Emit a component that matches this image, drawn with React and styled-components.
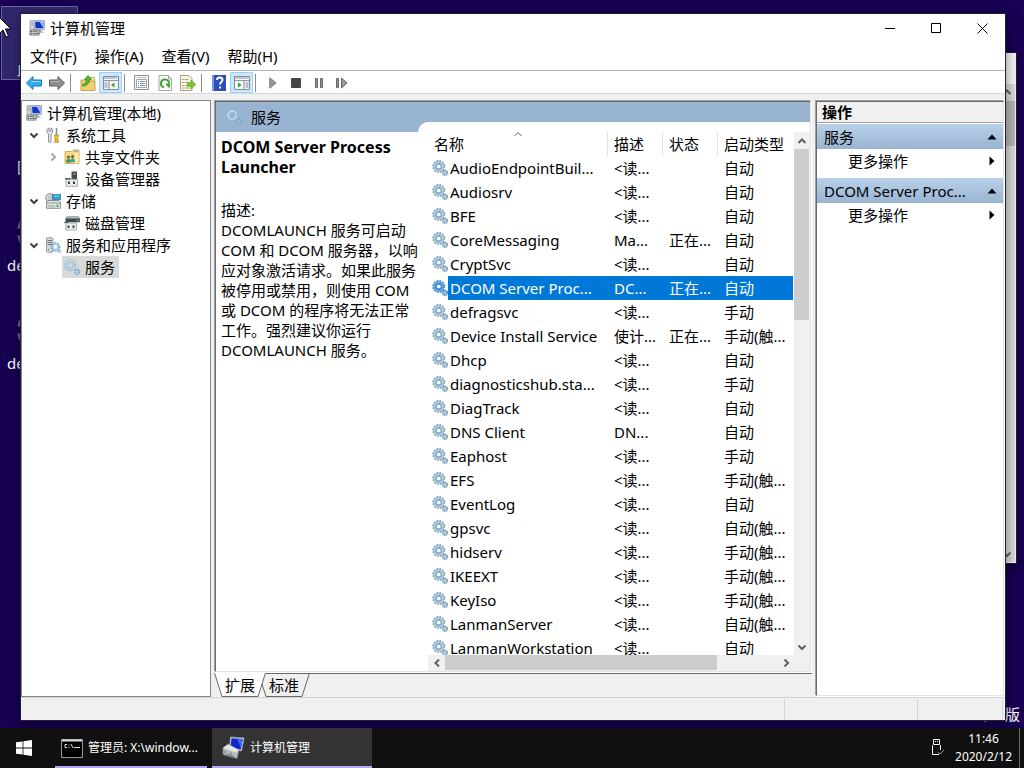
import { useState } from "react";
import styled, { createGlobalStyle, css } from "styled-components";

const services = [
  ["AudioEndpointBuil...", "<读...", "", "自动"],
  ["Audiosrv", "<读...", "", "自动"],
  ["BFE", "<读...", "", "自动"],
  ["CoreMessaging", "Ma...", "正在...", "自动"],
  ["CryptSvc", "<读...", "", "自动"],
  ["DCOM Server Proc...", "DC...", "正在...", "自动"],
  ["defragsvc", "<读...", "", "手动"],
  ["Device Install Service", "使计...", "正在...", "手动(触..."],
  ["Dhcp", "<读...", "", "自动"],
  ["diagnosticshub.sta...", "<读...", "", "手动"],
  ["DiagTrack", "<读...", "", "自动"],
  ["DNS Client", "DN...", "", "自动"],
  ["Eaphost", "<读...", "", "手动"],
  ["EFS", "<读...", "", "手动(触..."],
  ["EventLog", "<读...", "", "自动"],
  ["gpsvc", "<读...", "", "自动(触..."],
  ["hidserv", "<读...", "", "手动(触..."],
  ["IKEEXT", "<读...", "", "手动(触..."],
  ["KeyIso", "<读...", "", "手动(触..."],
  ["LanmanServer", "<读...", "", "自动(触..."],
  ["LanmanWorkstation", "<读...", "", "自动"],
];

//Icons.
const ComputerIcon = () => (
  <svg width="16" height="16" viewBox="0 0 16 16">
    <path d="M1 .8h4.500v8.500H1z" fill="#d5d8da" stroke="#8a8f94" strokeWidth=".7" />
    <path d="M2 3h2.500M2 5h2.500" stroke="#8e9498" strokeWidth=".8" />
    <path d="M4.700.5h11l-.4 9H5.500z" fill="#e3e7ea" stroke="#888e96" strokeWidth=".7" />
    <path d="M6 1.700h8.500l-.3 6.600H6.500z" fill="#1433cf" />
    <path d="M10.500 1.700h4l-.3 5.800z" fill="#9dbcf7" />
    <path d="M8.500 9.800h4v1.700h2v1.300h-5z" fill="#a3a8ad" />
    <path d="M.8 10h9.500v5.200H.8z" fill="#c4c8ca" stroke="#6f7578" strokeWidth=".7" />
    <path d="M1.500 11.500h1.500M4 11.500h1.500M6.500 11.500H8M1.500 13.500H3M4 13.500h1.500M6.500 13.500h3" stroke="#4f5659" />
  </svg>
);

const ConsoleIcon = () => (
  <svg width="23" height="24" viewBox="0 0 23 24">
    <path d="M8.500 1 22 2l-2.500 13-12-2z" fill="#e8ebee" stroke="#9299a3" strokeWidth=".8" />
    <path d="M9.500 2.300 20.800 3l-2 10.500L8.500 12z" fill="#0e25c9" />
    <path d="m15 2.600 5.800.4-1.800 9z" fill="#3e68ea" />
    <path d="m1 12 5-4 11 6-2 8.500L1 18.500z" fill="#b5babc" stroke="#7d8487" strokeWidth=".8" />
    <path d="m1 12 5-3.500 11 5.500-3 2.500z" fill="#e5e8e9" />
    <path d="M3 15v2M9 16.500v2.500M4 18l8 2.500" stroke="#767e82" strokeWidth="1.200" />
  </svg>
);

const GearsIcon = ({ selected }) => (
  <svg width="16" height="16" viewBox="0 0 16 16" fill="none">
    <circle cx="6.800" cy="6.500" r="5.600" stroke={selected ? "#2b7fcf" : "#6e94b1"} strokeWidth="1.700" strokeDasharray="1.800 1.120" />
    <circle cx="6.800" cy="6.500" r="3.900" stroke={selected ? "#5aa5e4" : "#a6c9e0"} strokeWidth="2.700" />
    <circle cx="6.800" cy="6.500" r="2.500" stroke={selected ? "#0b64b4" : "#64879f"} strokeWidth="1" fill="#fff" />
    <circle cx="13" cy="12.800" r="2.600" stroke={selected ? "#2b7fcf" : "#7196b0"} strokeWidth="1.300" strokeDasharray="1.200 .84" />
    <circle cx="13" cy="12.800" r="1.500" stroke={selected ? "#5aa5e4" : "#93b6cd"} strokeWidth="1.500" />
  </svg>
);

const PaleGears = () => (
  <svg width="16" height="16" viewBox="0 0 16 16" fill="none">
    <circle cx="6.200" cy="6.200" r="5.400" stroke="#86aeca" strokeWidth="1.300" strokeDasharray="1.700 1.130" />
    <circle cx="6.200" cy="6.200" r="4" stroke="#b7d8ea" strokeWidth="2.200" />
    <circle cx="6.200" cy="6.200" r="2.900" stroke="#86aeca" strokeWidth=".6" />
    <circle cx="13" cy="12.800" r="2.400" stroke="#6f9ab8" strokeWidth="1.500" strokeDasharray="1.200 .7" />
    <circle cx="13" cy="12.800" r="1.500" stroke="#9cc3db" />
  </svg>
);

const ToolsIcon = () => (
  <svg width="16" height="16" viewBox="0 0 16 16">
    <path d="M4 .8 2 2.500v3L3.500 7v8H6V7l1.700-1.500v-3L6 .8V4H4z" fill="#e6e8ea" stroke="#777d82" strokeWidth=".8" />
    <path d="M11.500 1v7" stroke="#8c9297" strokeWidth="1.600" />
    <path d="M9.700 8h3.600v1.600l-.7 1 .7 4.700H9.700l.7-4.700-.7-1z" fill="#f7bd1f" stroke="#b98208" strokeWidth=".8" />
  </svg>
);

const SharedIcon = () => (
  <svg width="16" height="16" viewBox="0 0 16 16">
    <path d="M1 2.500h7l1.500-1.500H15v13.500H1z" fill="#f3d981" stroke="#c4a34c" strokeWidth=".8" />
    <path d="M9.500 2h4" stroke="#4ea5e0" />
    <path d="M11 4h3.500v9.500L11 15z" fill="#fae9b0" />
    <circle cx="4.500" cy="8" r="1.500" fill="#7e5430" />
    <circle cx="8.500" cy="7.500" r="1.500" fill="#7e5430" />
    <path d="M2 13.500c0-5 5-5 5 0z" fill="#2d9b52" />
    <path d="M6.500 13c0-5 4.500-5 4.500 0z" fill="#3aa0a8" />
  </svg>
);

const DeviceIcon = () => (
  <svg width="16" height="16" viewBox="0 0 16 16">
    <path d="M7.500.5H13v8.300H7.500z" fill="#454c50" />
    <path d="M10.500 2v2" stroke="#65ca55" strokeWidth="1.500" />
    <path d="M2 8.300h11.500v7H2z" fill="#eceeef" stroke="#969b9e" strokeWidth=".8" />
    <path d="M1 7h5.500v1.500H1z" fill="#5a6064" />
    <path d="M4 10.500h2v2.500H4zM9 10.500h2v2.500H9z" fill="#3c4144" />
  </svg>
);

const StorageIcon = () => (
  <svg width="16" height="16" viewBox="0 0 16 16">
    <circle cx="5" cy="5" r="4.300" fill="#d2d5d6" stroke="#8d9295" />
    <circle cx="5" cy="5" r="1.200" fill="#fff" stroke="#888" strokeWidth=".6" />
    <path d="M7.500 1.500h8.200v5H7.500z" fill="#2aa5d0" stroke="#126f96" strokeWidth=".7" />
    <path d="M9 3h5" stroke="#8bdcf5" />
    <path d="M1.500 9 3 7.500h11L15.500 9v6.300h-14z" fill="#dfe3e4" stroke="#70777b" strokeWidth=".8" />
    <path d="M1.500 10h14M3 13h7" stroke="#949a9d" />
    <path d="M12.500 11.500v2.500" stroke="#38b338" strokeWidth="1.800" />
  </svg>
);

const DiskIcon = () => (
  <svg width="16" height="16" viewBox="0 0 16 16">
    <path d="M3 1.500h11.500l1.300 2v3.700H1.500V3.500z" fill="#3f464a" />
    <path d="M3.200 1.500h11l1 2H2z" fill="#b4b9bc" />
    <path d="M12.500 5.500h2" stroke="#5fd94d" />
    <path d="M1.800 8h10.700v7H1.800z" fill="#eceeef" stroke="#969b9e" strokeWidth=".8" />
    <path d="M0 7.500h4" stroke="#5a6064" />
    <path d="M3.500 10.500h2V13h-2zM8.500 10.500h2V13h-2z" fill="#3c4144" />
  </svg>
);

const ServerIcon = () => (
  <svg width="16" height="16" viewBox="0 0 16 16" fill="none">
    <path d="M1.500 1 6 .5l2 1v13l-2 1-4.500-.7z" fill="#d3d8da" stroke="#869096" strokeWidth=".8" />
    <path d="M2.500 3.500H7M2.500 5.500H7M2.500 7.500H7" stroke="#697379" />
    <path d="M3 12.500h1" stroke="#43ab50" strokeWidth="1.500" />
    <circle cx="10.500" cy="10" r="4" stroke="#6e98b7" strokeWidth="1.600" strokeDasharray="1.500 1" />
    <circle cx="10.500" cy="10" r="2.700" stroke="#a9cce3" strokeWidth="1.800" fill="#fff" />
    <circle cx="14.300" cy="14.300" r="1.200" stroke="#789fba" />
  </svg>
);

const ArrowIcon = ({ forward }) => (
  <svg width="16" height="16" viewBox="0 0 16 16">
    <path
      d={forward ? "M15.500 8 9 1.500V5H.5v6H9v3.500z" : "M.5 8 7 1.500V5h8.500v6H7v3.500z"}
      fill={forward ? "#8e8e8e" : "#35adeb"}
      stroke={forward ? "#5c5c5c" : "#1874b4"}
    />
    <path d={forward ? "M1.500 6.500h9" : "M5.500 6.500h9"} stroke={forward ? "#b5b5b5" : "#8fdbff"} />
  </svg>
);

const FolderUpIcon = () => (
  <svg width="16" height="16" viewBox="0 0 16 16">
    <path d="M1 5h6l1.500 1H15v9.500H1z" fill="#f2cf70" stroke="#c8a650" />
    <path d="M9.500 2.500h5V6h-5z" fill="#f9e9b4" stroke="#c8a650" strokeWidth=".8" />
    <path d="M2.500 9.500C5.500 9 6.500 7 6.500 4.500h-2L8 .5l3.500 4h-2c0 4-3 6.500-7 6.500z" fill="#53b82f" stroke="#2d861b" strokeWidth=".7" />
  </svg>
);

const PaneIcon = ({ right }) => (
  <svg width="16" height="14" viewBox="0 0 16 14">
    <path d="M.5.500h15v13H.5z" fill="#f5f6f7" stroke="#838d99" />
    <path d="M1 2h14M1 4.500h14" stroke="#8d98a6" />
    <path d="M12 2h1M14 2h1" stroke="#fff" />
    <path d={right ? "M10 5v8" : "M6 5v8"} stroke="#838d99" />
    <path d={right ? "M11.500 7h3M11.500 9h3M11.500 11h3" : "M1.500 7h3M1.500 9h3M1.500 11h3"} stroke="#7c8b9b" />
    <path d={right ? "M4 6.500v5L7.500 9z" : "M11.500 6.500v5L8 9z"} fill="#35a52a" />
  </svg>
);

const PropertiesIcon = () => (
  <svg width="16" height="16" viewBox="0 0 16 16">
    <path d="M.5.500h14v14H.5z" fill="#f8f8f8" stroke="#8b9198" />
    <path d="M3 2.500h9" stroke="#b5bcc3" />
    <path d="M2.500 4.500h10v8h-10z" fill="#fff" stroke="#9ba5b0" />
    <path d="M4 6.500h1M4 8.500h1M4 10.500h1" stroke="#4b9ac9" />
    <path d="M6 6.500h5M6 8.500h5M6 10.500h5" stroke="#7f91a3" />
  </svg>
);

const RefreshIcon = () => (
  <svg width="16" height="16" viewBox="0 0 16 16" fill="none">
    <path d="M2 .5h9.500L14.500 4v11.500H2z" fill="#fdfdfd" stroke="#a4a4a4" />
    <path d="M11.500 1v3h3" stroke="#a4a4a4" />
    <path d="M7 12.300A4 4 0 1 1 12 8.500" stroke="#3aa63a" strokeWidth="2" />
    <path d="M8 8.500h5.500l-1 5z" fill="#3aa63a" />
  </svg>
);

const ExportIcon = () => (
  <svg width="16" height="16" viewBox="0 0 16 16">
    <path d="M.5.500h8.500l3 3v12H.5z" fill="#fbf6df" stroke="#a79f7e" />
    <path d="M2.500 4.500h1M2.500 7.500h1M2.500 10.500h1M2.500 13h1" stroke="#555" />
    <path d="M4.500 4.500h4M4.500 7.500h4M4.500 10.500h3M4.500 13h5" stroke="#aaa58e" />
    <path d="M7.500 7.800H11V5l4.800 4.500L11 14v-2.800H7.500z" fill="#7cc92d" stroke="#57a01a" strokeWidth=".7" />
  </svg>
);

const HelpIcon = () => (
  <svg width="14" height="16" viewBox="0 0 14 16">
    <path d="M0 0h14v16H0z" fill="#2b4fb5" />
    <path d="M1 0v16" stroke="#7695e4" strokeWidth="2" />
    <path d="M5 5c0-3.300 5.500-3.300 5.500 0 0 2-2.500 2-2.500 4.500M8 11.500v2" fill="none" stroke="#fff" strokeWidth="1.900" />
  </svg>
);

const PlayIcon = () => (
  <svg width="8" height="12" viewBox="0 0 8 12">
    <path d="M.8.800 7 6l-6.200 5.200z" fill="#999" stroke="#777" />
  </svg>
);
const StopIcon = () => (
  <svg width="10" height="10" viewBox="0 0 10 10">
    <rect width="10" height="10" rx="1" fill="#454545" />
  </svg>
);
const PauseIcon = () => (
  <svg width="8" height="10" viewBox="0 0 8 10">
    <path d="M.5.500h2v9h-2zM5.500.5h2v9h-2z" fill="#999" stroke="#666" />
  </svg>
);
const RestartIcon = () => (
  <svg width="12" height="12" viewBox="0 0 12 12">
    <path d="M.5 1.500h2v9h-2zM5.500 1l5.500 5-5.500 5z" fill="#999" stroke="#666" />
  </svg>
);

const chevrons = {
  up: "M1.500 7 5 3.500 8.500 7",
  down: "M1.500 3.500 5 7l3.500-3.500",
  left: "M7 1.500 3.500 5 7 8.500",
  right: "M3.500 1.500 7 5 3.500 8.500",
};
const Chevron = ({ dir, color = "#606060", weight = 2 }) => (
  <svg width="10" height="10" viewBox="0 0 10 10" fill="none">
    <path d={chevrons[dir]} stroke={color} strokeWidth={weight} />
  </svg>
);

const Triangle = ({ up }) => (
  <svg width="10" height="10" viewBox="0 0 10 10">
    <path d={up ? "M5 2.500 9.500 7.500H.5z" : "M2.500.5v9l5-4.500z"} fill="#000" />
  </svg>
);

const tree = [
  { level: 0, label: "计算机管理(本地)", icon: <ComputerIcon /> },
  { level: 1, label: "系统工具", icon: <ToolsIcon />, open: true },
  { level: 2, label: "共享文件夹", icon: <SharedIcon />, open: false },
  { level: 2, label: "设备管理器", icon: <DeviceIcon /> },
  { level: 1, label: "存储", icon: <StorageIcon />, open: true },
  { level: 2, label: "磁盘管理", icon: <DiskIcon /> },
  { level: 1, label: "服务和应用程序", icon: <ServerIcon />, open: true },
  { level: 2, label: "服务", icon: <PaleGears /> },
];

function Toolbar() {
  return (
    <ToolRow>
      <Tool aria-label="后退"><ArrowIcon /></Tool>
      <Tool aria-label="前进"><ArrowIcon forward /></Tool>
      <Divider />
      <Tool $wide aria-label="上移"><FolderUpIcon /></Tool>
      <Tool $on aria-label="显示控制台树"><PaneIcon /></Tool>
      <Divider />
      <Tool $wide aria-label="属性"><PropertiesIcon /></Tool>
      <Tool aria-label="刷新"><RefreshIcon /></Tool>
      <Tool aria-label="导出列表"><ExportIcon /></Tool>
      <Divider />
      <Tool $wide aria-label="帮助"><HelpIcon /></Tool>
      <Tool $on aria-label="显示操作窗格"><PaneIcon right /></Tool>
      <Divider />
      <Tool $wide aria-label="启动"><PlayIcon /></Tool>
      <Tool aria-label="停止"><StopIcon /></Tool>
      <Tool aria-label="暂停"><PauseIcon /></Tool>
      <Tool aria-label="重启动"><RestartIcon /></Tool>
    </ToolRow>
  );
}

function ConsoleTree() {
  //States.
  const [current, setCurrent] = useState("服务");

  return (
    <TreePane>
      {tree.map((node) => (
        <TreeRow key={node.label} $level={node.level}>
          {node.level > 0 && (
            <Twisty>
              {node.open !== undefined && (
                <Chevron
                  dir={node.open ? "down" : "right"}
                  color={node.open ? "#404040" : "#a6a6a6"}
                />
              )}
            </Twisty>
          )}
          <TreeNode $selected={node.label === current} onClick={() => setCurrent(node.label)}>
            {node.icon}
            {node.label}
          </TreeNode>
        </TreeRow>
      ))}
    </TreePane>
  );
}

function ServiceList() {
  //States.
  const [selected, setSelected] = useState(5);

  return (
    <ListArea>
      <ListView>
        <Table>
          <colgroup>
            <col width="180" />
            <col width="55" />
            <col width="55" />
            <col />
          </colgroup>
          <thead>
            <tr>
              <Heading>
                名称
                <SortMark><Chevron dir="up" weight={1} /></SortMark>
              </Heading>
              <Heading>描述</Heading>
              <Heading>状态</Heading>
              <Heading>启动类型</Heading>
            </tr>
          </thead>
          <tbody>
            {services.map(([name, desc, state, startup], i) => (
              <ServiceRow key={name} $selected={i === selected} onClick={() => setSelected(i)}>
                <NameCell>
                  <NameBox>
                    <GearsIcon selected={i === selected} />
                    <Name $selected={i === selected}>{name}</Name>
                  </NameBox>
                </NameCell>
                <Cell>{desc}</Cell>
                <Cell>{state}</Cell>
                <Cell>{startup}</Cell>
              </ServiceRow>
            ))}
          </tbody>
        </Table>
      </ListView>
      <VScroll>
        <ScrollButton aria-label="向上"><Chevron dir="up" /></ScrollButton>
        <VTrack><VThumb /></VTrack>
        <ScrollButton aria-label="向下"><Chevron dir="down" /></ScrollButton>
      </VScroll>
      <HScroll>
        <ScrollButton aria-label="向左"><Chevron dir="left" /></ScrollButton>
        <HTrack><HThumb /></HTrack>
        <ScrollButton aria-label="向右"><Chevron dir="right" /></ScrollButton>
      </HScroll>
    </ListArea>
  );
}

function ViewTab({ active, children }) {
  return (
    <TabButton $active={active}>
      <svg width="52" height="24" viewBox="0 0 52 24">
        <path d="M.5 0 8 23.500h36L51.500 0z" fill={active ? "#fff" : "#f0f0f0"} />
        <path d="M.5 0 8 23.500h36L51.500 0" fill="none" stroke="#696969" />
        {!active && <path d="M0 .5h52" stroke="#696969" />}
      </svg>
      <span>{children}</span>
    </TabButton>
  );
}

function ManagementWindow() {
  return (
    <Window>
      <TitleBar>
        <ComputerIcon />
        <Caption>计算机管理</Caption>
        <CaptionButton aria-label="最小化">
          <svg width="10" height="11"><path d="M0 5.500h10" stroke="#000" /></svg>
        </CaptionButton>
        <CaptionButton aria-label="最大化">
          <svg width="11" height="11"><path d="M.5.500h9v9h-9z" fill="none" stroke="#000" /></svg>
        </CaptionButton>
        <CaptionButton aria-label="关闭">
          <svg width="11" height="11"><path d="m.5.500 10 10m0-10-10 10" stroke="#000" /></svg>
        </CaptionButton>
      </TitleBar>
      <MenuBar>
        <MenuItem>文件(F)</MenuItem>
        <MenuItem>操作(A)</MenuItem>
        <MenuItem>查看(V)</MenuItem>
        <MenuItem>帮助(H)</MenuItem>
      </MenuBar>
      <Toolbar />
      <Panes>
        <ConsoleTree />
        <Center>
          <Result>
            <Banner>
              <BannerTitle><PaleGears />服务</BannerTitle>
              <BannerNotch />
            </Banner>
            <ResultBody>
              <Detail>
                <DetailTitle>DCOM Server Process Launcher</DetailTitle>
                <DetailText>描述:</DetailText>
                <DetailText>
                  DCOMLAUNCH 服务可启动 COM 和 DCOM 服务器，以响应对象激活请求。如果此服务被停用或禁用，则使用 COM 或 DCOM 的程序将无法正常工作。强烈建议你运行 DCOMLAUNCH 服务。
                </DetailText>
              </Detail>
              <ServiceList />
            </ResultBody>
          </Result>
          <Tabs>
            <ViewTab active>扩展</ViewTab>
            <ViewTab>标准</ViewTab>
            <TabRule />
          </Tabs>
        </Center>
        <Actions>
          <ActionsHeading>操作</ActionsHeading>
          <ActionGroup>服务<Triangle up /></ActionGroup>
          <ActionItem>更多操作<Triangle /></ActionItem>
          <ActionGroup>DCOM Server Proc...<Triangle up /></ActionGroup>
          <ActionItem>更多操作<Triangle /></ActionItem>
        </Actions>
      </Panes>
      <StatusBar>
        <StatusCell />
        <StatusCell $width="133px" />
        <StatusCell $width="85px" />
      </StatusBar>
    </Window>
  );
}

const DesktopGear = () => (
  <svg width="46" height="46" viewBox="0 0 46 46" fill="none" stroke="#6f6791">
    <circle cx="23" cy="23" r="20" strokeWidth="6" strokeDasharray="9 6.700" strokeDashoffset="-3" />
    <circle cx="23" cy="23" r="14" strokeWidth="9" />
  </svg>
);

function App() {
  return (
    <Screen>
      <GlobalStyle />
      <Desktop>
        <Shortcuts>
          <Shortcut $selected>此电脑</Shortcut>
          <Shortcut>回收站</Shortcut>
          <Shortcut><DesktopGear />desktop1</Shortcut>
          <Shortcut><DesktopGear />desktop2</Shortcut>
        </Shortcuts>
        <Edition>Windows 专业版</Edition>
        <BackWindow>
          <BackScroll>
            <Chevron dir="up" />
            <BackThumb />
            <Chevron dir="down" />
          </BackScroll>
        </BackWindow>
        <ManagementWindow />
        <Cursor width="13" height="21" viewBox="0 0 13 21">
          <path d="M.5.500v16L4 13l3 7 2.500-1-3-7h5.500z" fill="#fff" stroke="#000" />
        </Cursor>
      </Desktop>
      <Taskbar>
        <StartButton aria-label="开始">
          <svg width="16" height="16" viewBox="0 0 16 16" fill="#fff">
            <path d="M0 2.300 6.600 1.400v6.200H0zM7.400 1.300 16 0v7.600H7.400zM0 8.400h6.600v6.200L0 13.700zM7.400 8.400H16V16l-8.600-1.300z" />
          </svg>
        </StartButton>
        <Task $width="152px">
          <svg width="22" height="19" viewBox="0 0 22 19">
            <path d="M.5.500h21v18H.5z" fill="#000" stroke="#969696" />
            <path d="M1 1.500h20" stroke="#d4d8dc" strokeWidth="2" />
            <path d="M6 5.500H4v3h2M8 5.500v1M8 8v1M10 5l2 4M13 8.500h6" stroke="#ddd" fill="none" />
          </svg>
          管理员: X:\window...
        </Task>
        <Task $width="160px" $active>
          <ConsoleIcon />
          计算机管理
        </Task>
        <Tray>
          <svg width="14" height="18" viewBox="0 0 14 18" fill="none" stroke="#fff">
            <path d="M2.500 5V.5h6V5M4 2.500h1M6 2.500h1M8 15.500H1.500v-9l1-1h6l1 1V11" />
            <path d="m7 13 2 2 4-4" stroke="#999" />
          </svg>
          <Clock>
            <span>11:46</span>
            <span>2020/2/12</span>
          </Clock>
        </Tray>
      </Taskbar>
    </Screen>
  );
}

export default App;

const GlobalStyle = createGlobalStyle`
  * {
    box-sizing: border-box;
  }

  body {
    margin: 0;
    font-family: "Noto Sans", "Noto Sans CJK SC", sans-serif;
    font-size: 15px;
    line-height: 20px;
    color: #000;
    overflow: hidden;
  }

  button {
    font: inherit;
    color: inherit;
    border: 0;
    padding: 0;
    background: none;
    white-space: nowrap;
  }

  svg {
    flex-shrink: 0;
  }
`;

const Screen = styled.div`
  display: flex;
  flex-direction: column;
  height: 100vh;
  background: #180052;
`;

const Desktop = styled.main`
  position: relative;
  flex: 1;
  min-height: 0;
  overflow: hidden;
`;

const Shortcuts = styled.div`
  display: flex;
  flex-direction: column;
  gap: 24px;
  width: 78px;
  padding: 6px 0 0 1px;
`;

const Shortcut = styled.div`
  display: flex;
  flex-direction: column;
  align-items: center;
  justify-content: flex-end;
  height: 74px;
  color: #fff;
  border: 1px solid ${({ $selected }) => ($selected ? "#6b64a0" : "transparent")};
  background: ${({ $selected }) => ($selected ? "#30286e" : "transparent")};
`;

const Edition = styled.div`
  position: absolute;
  right: 4px;
  bottom: 4px;
  color: #fff;
`;

const BackWindow = styled.div`
  position: absolute;
  top: 52px;
  right: 7px;
  bottom: 164px;
  width: 60%;
  display: flex;
  justify-content: flex-end;
  padding: 31px 1px 1px;
  background: #f2f2f2;
  border: 1px solid #251a45;
  box-shadow: 0 3px 10px rgba(0, 0, 0, 0.4);
`;

const BackScroll = styled.div`
  display: flex;
  flex-direction: column;
  align-items: center;
  width: 16px;
  padding: 3px 0;
  background: #d8d8d8;
`;

const BackThumb = styled.div`
  width: 16px;
  height: 45px;
  margin: 4px 0 auto;
  background: #b4b4b4;
`;

const Window = styled.section`
  position: absolute;
  top: 14px;
  right: 19px;
  bottom: 8px;
  left: 21px;
  display: flex;
  flex-direction: column;
  background: #f0f0f0;
  box-shadow: 0 0 0 1px #25203a, 0 3px 12px rgba(0, 0, 0, 0.5);
`;

const TitleBar = styled.header`
  display: flex;
  align-items: center;
  height: 28px;
  padding-left: 8px;
  background: #fff;
`;

const Caption = styled.div`
  flex: 1;
  padding-left: 5px;
`;

const CaptionButton = styled.button`
  display: grid;
  place-items: center;
  width: 46px;
  height: 28px;
`;

const MenuBar = styled.nav`
  display: flex;
  gap: 18px;
  height: 29px;
  padding-left: 9px;
  background: #fff;
  border-bottom: 1px solid #b5b5b5;
`;

const MenuItem = styled.button`
  height: 28px;
`;

const ToolRow = styled.div`
  display: flex;
  align-items: center;
  height: 23px;
  padding: 1px 0 0 1px;
  background: #fff;
  border-bottom: 1px solid #d9d9d9;
`;

const Tool = styled.button`
  display: grid;
  place-items: center;
  width: 23px;
  height: 21px;
  margin-left: ${({ $wide }) => ($wide ? "5px" : "0")};
  border: 1px solid ${({ $on }) => ($on ? "#99d1ff" : "transparent")};
  background: ${({ $on }) => ($on ? "#cce8ff" : "transparent")};
`;

const Divider = styled.span`
  width: 1px;
  height: 18px;
  margin: 0 0 0 2px;
  background: #8c8c8c;
`;

const Panes = styled.div`
  flex: 1;
  display: flex;
  gap: 3px;
  min-height: 0;
  padding-top: 6px;
`;

const TreePane = styled.div`
  width: 190px;
  padding-top: 1px;
  background: #fff;
  border: 1px solid #828790;
`;

const TreeRow = styled.div`
  display: flex;
  height: 22px;
  padding-left: ${({ $level }) => 2 + 19 * Math.max($level - 1, 0)}px;
`;

const Twisty = styled.span`
  display: grid;
  place-items: center;
  width: 19px;
`;

const TreeNode = styled.button`
  display: flex;
  align-items: center;
  gap: 5px;
  padding: 0 4px 0 2px;
  background: ${({ $selected }) => ($selected ? "#d9d9d9" : "transparent")};
`;

const Center = styled.div`
  flex: 1;
  display: flex;
  flex-direction: column;
  min-width: 0;
`;

const sunken = css`
  margin: 1px;
  border: 1px solid;
  border-color: #696969 #e3e3e3 #e3e3e3 #696969;
  box-shadow: -1px -1px 0 #a0a0a0, 1px 1px 0 #fff;
`;

const Result = styled.div`
  flex: 1;
  display: flex;
  flex-direction: column;
  min-height: 0;
  background: #fff;
  ${sunken}
`;

const Banner = styled.div`
  display: flex;
  align-items: flex-end;
  height: 30px;
  background: #99b4d1;
`;

const BannerTitle = styled.div`
  display: flex;
  align-items: center;
  gap: 9px;
  width: 202px;
  height: 30px;
  padding-left: 10px;
`;

const BannerNotch = styled.div`
  flex: 1;
  height: 10px;
  background: #fff;
  border-top-left-radius: 10px;
`;

const ResultBody = styled.div`
  flex: 1;
  display: flex;
  min-height: 0;
`;

const Detail = styled.div`
  width: 212px;
  padding: 5px 4px 0 5px;
`;

const DetailTitle = styled.h1`
  margin: 0 0 23px;
  font-size: 16px;
  font-weight: 700;
  line-height: 20px;
`;

const DetailText = styled.p`
  margin: 0;
`;

const ListArea = styled.div`
  flex: 1;
  display: grid;
  grid-template: minmax(0, 1fr) 15px / minmax(0, 1fr) 15px;
  min-width: 0;
  padding: 0 1px 1px 0;
  background: #f0f0f0;
`;

const ListView = styled.div`
  overflow: hidden;
  padding-right: 1px;
  background: #fff;
`;

const Table = styled.table`
  width: 100%;
  table-layout: fixed;
  border-collapse: separate;
  border-spacing: 0;
`;

const Heading = styled.th`
  position: relative;
  height: 24px;
  padding: 0 0 0 6px;
  font-weight: 400;
  text-align: left;
  white-space: nowrap;
  border-right: 1px solid #e2e2e2;

  &:last-child {
    border-right: 0;
  }
`;

const SortMark = styled.span`
  position: absolute;
  top: -3px;
  right: 0;
  left: 0;
  display: grid;
  justify-items: center;
`;

const Cell = styled.td`
  height: 24px;
  padding: 0 0 0 6px;
  white-space: nowrap;
  overflow: hidden;
`;

const NameCell = styled.td`
  height: 24px;
  padding: 0 0 0 4px;
  overflow: hidden;
`;

const NameBox = styled.div`
  display: flex;
  align-items: center;
`;

const Name = styled.span`
  flex: 1;
  height: 24px;
  padding-left: 2px;
  line-height: 24px;
  white-space: nowrap;
  background: ${({ $selected }) => ($selected ? "#0078d7" : "transparent")};
`;

const ServiceRow = styled.tr`
  color: ${({ $selected }) => ($selected ? "#fff" : "#000")};

  ${Cell} {
    background: ${({ $selected }) => ($selected ? "#0078d7" : "transparent")};
  }
`;

const ScrollButton = styled.button`
  display: grid;
  place-items: center;
  width: 17px;
  height: 17px;
`;

const VScroll = styled.div`
  display: flex;
  flex-direction: column;
  align-items: center;
`;

const VTrack = styled.div`
  flex: 1;
  width: 15px;
`;

const VThumb = styled.div`
  height: 35%;
  background: #cdcdcd;
`;

const HScroll = styled.div`
  display: flex;
  align-items: center;
`;

const HTrack = styled.div`
  flex: 1;
  height: 15px;
`;

const HThumb = styled.div`
  width: 82%;
  height: 15px;
  background: #cdcdcd;
`;

const Tabs = styled.div`
  display: flex;
  height: 24px;
`;

const TabButton = styled.button`
  position: relative;
  z-index: ${({ $active }) => ($active ? 1 : 0)};
  width: 52px;
  height: 24px;
  margin-right: -8px;

  svg {
    position: absolute;
    top: 0;
    left: 0;
  }

  span {
    position: relative;
  }
`;

const TabRule = styled.div`
  flex: 1;
  border-top: 1px solid #696969;
`;

const Actions = styled.aside`
  width: 188px;
  background: #fff;
  ${sunken}
`;

const ActionsHeading = styled.h2`
  height: 21px;
  margin: 0 0 1px;
  padding-left: 5px;
  font-size: 15px;
  font-weight: 700;
  line-height: 20px;
  background: #f0f0f0;
  border-bottom: 1px solid #a0a0a0;
`;

const ActionGroup = styled.button`
  display: flex;
  align-items: center;
  justify-content: space-between;
  width: 100%;
  height: 25px;
  padding: 0 6px 0 7px;
  background: linear-gradient(#b9d1ea, #99b4d1);
`;

const ActionItem = styled.button`
  display: flex;
  align-items: center;
  justify-content: space-between;
  width: 100%;
  height: 24px;
  margin-bottom: 5px;
  padding: 0 6px 0 31px;
`;

const StatusBar = styled.footer`
  display: flex;
  height: 23px;
  padding: 1px 2px 0 0;
  border-top: 1px solid #d4d4d4;
`;

const StatusCell = styled.div`
  flex: ${({ $width }) => ($width ? `0 0 ${$width}` : "1")};
  border-right: 1px solid #d4d4d4;
`;

const Cursor = styled.svg`
  position: absolute;
  top: 17px;
  left: -1px;
`;

const Taskbar = styled.footer`
  display: flex;
  height: 40px;
  font-size: 12px;
  line-height: 18px;
  color: #fff;
  background: #101010;
`;

const StartButton = styled.button`
  display: grid;
  place-items: center;
  width: 48px;
  margin-right: 7px;
`;

const Task = styled.button`
  display: flex;
  align-items: center;
  gap: 5px;
  width: ${({ $width }) => $width};
  margin-right: 5px;
  padding: 2px 6px 0 ${({ $active }) => ($active ? "10px" : "6px")};
  background: ${({ $active }) => ($active ? "#333" : "transparent")};
  border-bottom: 2px solid #b9a6f0;
`;

const Tray = styled.div`
  display: flex;
  align-items: center;
  gap: 10px;
  margin: 0 4px 0 auto;
  padding-right: 7px;
  border-right: 1px solid #6a6a6a;
`;

const Clock = styled.time`
  display: flex;
  flex-direction: column;
  align-items: center;
`;
